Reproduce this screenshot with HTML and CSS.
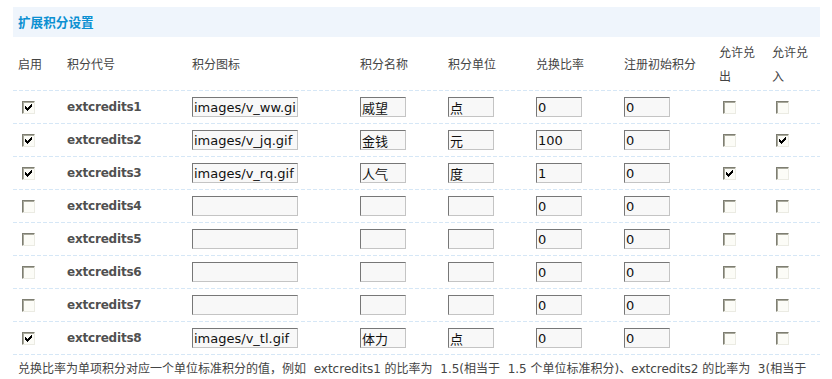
FILE: index.html
```html
<!DOCTYPE html>
<html lang="zh-CN">
<head>
<meta charset="utf-8">
<title>扩展积分设置</title>
<link rel="stylesheet" href="styles.css">
</head>
<body>
<div class="panel">
  <div class="bar">扩展积分设置</div>
  <div class="row head">
    <div class="c">启用</div>
    <div class="c">积分代号</div>
    <div class="c">积分图标</div>
    <div class="c">积分名称</div>
    <div class="c">积分单位</div>
    <div class="c">兑换比率</div>
    <div class="c">注册初始积分</div>
    <div class="c">允许兑出</div>
    <div class="c">允许兑入</div>
  </div>
  <div class="row">
    <div class="c"><input type="checkbox" class="cb" checked></div>
    <div class="c code">extcredits1</div>
    <div class="c"><input class="txt wide" value="images/v_ww.gif"></div>
    <div class="c"><input class="txt" value="威望"></div>
    <div class="c"><input class="txt" value="点"></div>
    <div class="c"><input class="txt" value="0"></div>
    <div class="c"><input class="txt" value="0"></div>
    <div class="c"><input type="checkbox" class="cb"></div>
    <div class="c"><input type="checkbox" class="cb"></div>
  </div>
  <div class="row">
    <div class="c"><input type="checkbox" class="cb" checked></div>
    <div class="c code">extcredits2</div>
    <div class="c"><input class="txt wide" value="images/v_jq.gif"></div>
    <div class="c"><input class="txt" value="金钱"></div>
    <div class="c"><input class="txt" value="元"></div>
    <div class="c"><input class="txt" value="100"></div>
    <div class="c"><input class="txt" value="0"></div>
    <div class="c"><input type="checkbox" class="cb"></div>
    <div class="c"><input type="checkbox" class="cb" checked></div>
  </div>
  <div class="row">
    <div class="c"><input type="checkbox" class="cb" checked></div>
    <div class="c code">extcredits3</div>
    <div class="c"><input class="txt wide" value="images/v_rq.gif"></div>
    <div class="c"><input class="txt" value="人气"></div>
    <div class="c"><input class="txt" value="度"></div>
    <div class="c"><input class="txt" value="1"></div>
    <div class="c"><input class="txt" value="0"></div>
    <div class="c"><input type="checkbox" class="cb" checked></div>
    <div class="c"><input type="checkbox" class="cb"></div>
  </div>
  <div class="row">
    <div class="c"><input type="checkbox" class="cb"></div>
    <div class="c code">extcredits4</div>
    <div class="c"><input class="txt wide" value=""></div>
    <div class="c"><input class="txt" value=""></div>
    <div class="c"><input class="txt" value=""></div>
    <div class="c"><input class="txt" value="0"></div>
    <div class="c"><input class="txt" value="0"></div>
    <div class="c"><input type="checkbox" class="cb"></div>
    <div class="c"><input type="checkbox" class="cb"></div>
  </div>
  <div class="row">
    <div class="c"><input type="checkbox" class="cb"></div>
    <div class="c code">extcredits5</div>
    <div class="c"><input class="txt wide" value=""></div>
    <div class="c"><input class="txt" value=""></div>
    <div class="c"><input class="txt" value=""></div>
    <div class="c"><input class="txt" value="0"></div>
    <div class="c"><input class="txt" value="0"></div>
    <div class="c"><input type="checkbox" class="cb"></div>
    <div class="c"><input type="checkbox" class="cb"></div>
  </div>
  <div class="row">
    <div class="c"><input type="checkbox" class="cb"></div>
    <div class="c code">extcredits6</div>
    <div class="c"><input class="txt wide" value=""></div>
    <div class="c"><input class="txt" value=""></div>
    <div class="c"><input class="txt" value=""></div>
    <div class="c"><input class="txt" value="0"></div>
    <div class="c"><input class="txt" value="0"></div>
    <div class="c"><input type="checkbox" class="cb"></div>
    <div class="c"><input type="checkbox" class="cb"></div>
  </div>
  <div class="row">
    <div class="c"><input type="checkbox" class="cb"></div>
    <div class="c code">extcredits7</div>
    <div class="c"><input class="txt wide" value=""></div>
    <div class="c"><input class="txt" value=""></div>
    <div class="c"><input class="txt" value=""></div>
    <div class="c"><input class="txt" value="0"></div>
    <div class="c"><input class="txt" value="0"></div>
    <div class="c"><input type="checkbox" class="cb"></div>
    <div class="c"><input type="checkbox" class="cb"></div>
  </div>
  <div class="row">
    <div class="c"><input type="checkbox" class="cb" checked></div>
    <div class="c code">extcredits8</div>
    <div class="c"><input class="txt wide" value="images/v_tl.gif"></div>
    <div class="c"><input class="txt" value="体力"></div>
    <div class="c"><input class="txt" value="点"></div>
    <div class="c"><input class="txt" value="0"></div>
    <div class="c"><input class="txt" value="0"></div>
    <div class="c"><input type="checkbox" class="cb"></div>
    <div class="c"><input type="checkbox" class="cb"></div>
  </div>
  <p class="note">兑换比率为单项积分对应一个单位标准积分的值，例如&nbsp; extcredits1 的比率为&nbsp; 1.5(相当于&nbsp; 1.5 个单位标准积分)、extcredits2 的比率为&nbsp; 3(相当于&nbsp; 3 个单位标准积分)、extcredits3 的比率为&nbsp; 15(相当于&nbsp; 15 个单位标准积分)，则 extcredits3 的 1 分相当于 extcredits2 的 5 分或 extcredits1 的 10 分。一旦设置兑换比率，则用户将可以在个人中心自行兑换各项设置了兑换比率的积分，如不希望实行积分自由兑换，请将其兑换比率设置为 0。</p>
</div>
</body>
</html>
```
FILE: styles.css
```css
html, body {
  margin: 0;
  padding: 0;
  background: #fff;
}
body {
  font-family: "DejaVu Sans", "Noto Sans CJK SC", sans-serif;
  font-size: 12px;
  color: #444;
}
.panel {
  width: 807px;
  margin: 7px 12px 0 13px;
}
.bar {
  height: 30px;
  line-height: 30px;
  padding-left: 5px;
  background: #eff5fc;
  color: #0b90d2;
  font-family: "Noto Sans CJK SC", sans-serif;
  font-size: 12.6px;
  font-weight: bold;
}
.row {
  display: grid;
  grid-template-columns: 49px 125px 168px 88px 88px 88px 95px 53px 53px;
  align-items: center;
  height: 33px;
  box-sizing: border-box;
  padding-bottom: 1px;
  background: linear-gradient(to right, #d6e7f6 4px, transparent 4px) left bottom / 6px 1px repeat-x;
}
.row.head {
  height: 54px;
  font-family: "Noto Sans CJK SC", sans-serif;
  font-size: 12px;
  line-height: 24px;
  color: #444;
}
.c {
  padding: 0 5px;
  display: flex;
  align-items: center;
}
.row.head .c {
  display: block;
}
.code {
  font-family: "DejaVu Sans", sans-serif;
  font-weight: bold;
  font-size: 12px;
  letter-spacing: -0.2px;
  color: #505050;
}
.txt {
  box-sizing: border-box;
  width: 46px;
  height: 20px;
  margin: 0;
  padding: 0 1px;
  border: 1px solid;
  border-color: #777 #c4c4c4 #c4c4c4 #777;
  background: #f8f8f8;
  font-family: "DejaVu Sans", "Noto Sans CJK SC", sans-serif;
  font-size: 13px;
  color: #111;
  outline: none;
}
.txt.wide {
  width: 106px;
}
.cb {
  -webkit-appearance: none;
  appearance: none;
  box-sizing: border-box;
  width: 13px;
  height: 13px;
  margin: 3px 3px 3px 4px;
  border: 1px solid;
  border-color: #7e7e72 #ebebe3 #ebebe3 #7e7e72;
  box-shadow: inset 1px 1px 0 #a9a99c;
  background: #fcfcf7;
}
.cb:checked {
  background: #fcfcf7 url("data:image/svg+xml,%3Csvg xmlns='http://www.w3.org/2000/svg' width='11' height='11' viewBox='0 0 11 11'%3E%3Cpath d='M2 4h1v1h1v1h1V5h1V4h1V3h1V2h1v3H8v1H7v1H6v1H5v1H4V8H3V7H2z' fill='%23000'/%3E%3C/svg%3E") no-repeat 0 0;
}
.note {
  margin: 0;
  padding: 4px 5px 0 5px;
  font-family: "DejaVu Sans", "Noto Sans CJK SC", sans-serif;
  font-size: 12px;
  line-height: 20px;
  color: #444;
}
```
